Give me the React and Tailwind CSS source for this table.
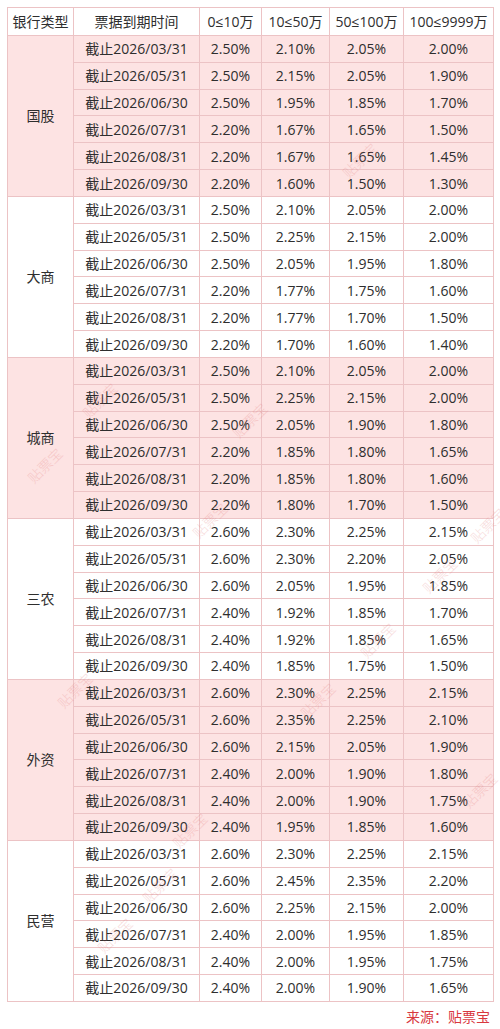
import React from "react";

const dates = ["03/31", "05/31", "06/30", "07/31", "08/31", "09/30"];
const groups = [
  { name: "国股", pink: true, rows: [
    ["2.50", "2.10", "2.05", "2.00"], ["2.50", "2.15", "2.05", "1.90"], ["2.50", "1.95", "1.85", "1.70"],
    ["2.20", "1.67", "1.65", "1.50"], ["2.20", "1.67", "1.65", "1.45"], ["2.20", "1.60", "1.50", "1.30"]] },
  { name: "大商", pink: false, rows: [
    ["2.50", "2.10", "2.05", "2.00"], ["2.50", "2.25", "2.15", "2.00"], ["2.50", "2.05", "1.95", "1.80"],
    ["2.20", "1.77", "1.75", "1.60"], ["2.20", "1.77", "1.70", "1.50"], ["2.20", "1.70", "1.60", "1.40"]] },
  { name: "城商", pink: true, rows: [
    ["2.50", "2.10", "2.05", "2.00"], ["2.50", "2.25", "2.15", "2.00"], ["2.50", "2.05", "1.90", "1.80"],
    ["2.20", "1.85", "1.80", "1.65"], ["2.20", "1.85", "1.80", "1.60"], ["2.20", "1.80", "1.70", "1.50"]] },
  { name: "三农", pink: false, rows: [
    ["2.60", "2.30", "2.25", "2.15"], ["2.60", "2.30", "2.20", "2.05"], ["2.60", "2.05", "1.95", "1.85"],
    ["2.40", "1.92", "1.85", "1.70"], ["2.40", "1.92", "1.85", "1.65"], ["2.40", "1.85", "1.75", "1.50"]] },
  { name: "外资", pink: true, rows: [
    ["2.60", "2.30", "2.25", "2.15"], ["2.60", "2.35", "2.25", "2.10"], ["2.60", "2.15", "2.05", "1.90"],
    ["2.40", "2.00", "1.90", "1.80"], ["2.40", "2.00", "1.90", "1.75"], ["2.40", "1.95", "1.85", "1.60"]] },
  { name: "民营", pink: false, rows: [
    ["2.60", "2.30", "2.25", "2.15"], ["2.60", "2.45", "2.35", "2.20"], ["2.60", "2.25", "2.15", "2.00"],
    ["2.40", "2.00", "1.95", "1.85"], ["2.40", "2.00", "1.95", "1.75"], ["2.40", "2.00", "1.90", "1.65"]] },
];

const marks = [
  [360, 160], [100, 400], [45, 465], [488, 525], [440, 575], [378, 640], [318, 700],
  [75, 690], [190, 830], [160, 885], [480, 790], [115, 935], [250, 420], [210, 520],
];

export default function App() {
  const font = { fontFamily: '"Open Sans", "Noto Sans CJK SC", sans-serif' };
  return (
    <div className="relative w-[500px] h-[1029px] bg-white overflow-hidden text-[#2e2e2e] text-[14px]" style={font}>
      <div className="pt-[7px] pl-[7px]">
        <table className="border-collapse table-fixed w-[486px]">
          <colgroup>
            <col className="w-[66px]" />
            <col className="w-[126px]" />
            <col className="w-[62px]" />
            <col className="w-[68px]" />
            <col className="w-[74px]" />
            <col className="w-[90px]" />
          </colgroup>
          <thead>
            <tr className="h-[28px]">
              {["银行类型", "票据到期时间", "0≤10万", "10≤50万", "50≤100万", "100≤9999万"].map((h) => (
                <th key={h} className="border border-[#ecc3c5] font-normal text-center p-0 whitespace-nowrap">{h}</th>
              ))}
            </tr>
          </thead>
          <tbody>
            {groups.map((g) =>
              g.rows.map((r, i) => (
                <tr key={g.name + i} className={`h-[26.83px] ${g.pink ? "bg-[#fde3e3]" : "bg-white"}`}>
                  {i === 0 && (
                    <td rowSpan={6} className="border border-[#ecc3c5] text-center p-0">{g.name}</td>
                  )}
                  <td className="border border-[#ecc3c5] text-center p-0 whitespace-nowrap">截止2026/{dates[i]}</td>
                  {r.map((v, j) => (
                    <td key={j} className="border border-[#ecc3c5] text-center p-0">{v}%</td>
                  ))}
                </tr>
              ))
            )}
          </tbody>
        </table>
        <div className="flex justify-end pr-[10px] pt-[4px] text-[#d8383e] text-[14px]">来源：贴票宝</div>
      </div>
      {marks.map(([x, y], k) => (
        <div
          key={k}
          className="absolute text-[14px] font-light text-[#e27070] opacity-25 -rotate-45 pointer-events-none whitespace-nowrap"
          style={{ left: x - 21, top: y - 10 }}
        >
          贴票宝
        </div>
      ))}
    </div>
  );
}
